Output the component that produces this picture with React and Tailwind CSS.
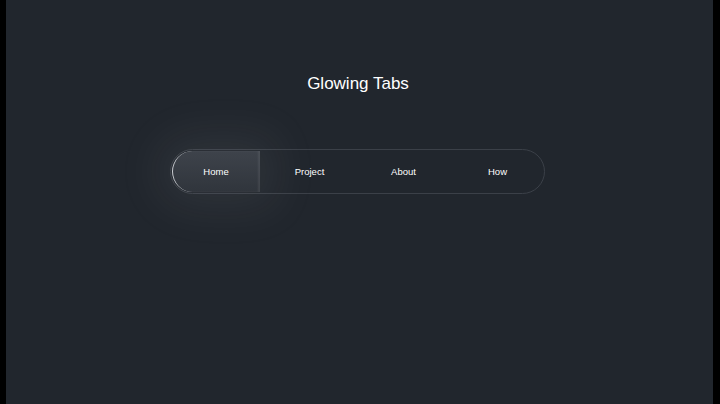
export default function App() {
  const tabs = ['Home', 'Project', 'About', 'How']
  const active = 0

  return (
    <div className="flex h-[404px] w-[720px] bg-black pl-[6px] pr-[7px]">
      <div className="flex flex-1 flex-col items-center bg-[#21262d] font-['Liberation_Sans',Arial,sans-serif]">
        <h1 className="mt-[73px] ml-[-3px] text-[17px] leading-[22px] text-white">Glowing Tabs</h1>

        <nav className="mt-[54px] ml-[-5px] flex h-[45px] w-[375px] gap-[6px] rounded-full border border-[#3b4048] p-[1px]">
          {tabs.map((tab, i) => (
            <button
              key={tab}
              className={
                i === active
                  ? 'flex w-[88px] items-center justify-center rounded-l-full rounded-r-[4px] border-l-[1.5px] border-[#c9ccd1] bg-gradient-to-b from-[#3e434b] to-[#30353c] pt-[1px] text-[9.5px] text-white shadow-[0_0_45px_16px_rgba(210,210,210,0.08),inset_-2px_0_2px_rgba(255,255,255,0.08)]'
                  : 'flex w-[88px] items-center justify-center pt-[1px] text-[9.5px] text-white'
              }
            >
              {tab}
            </button>
          ))}
        </nav>
      </div>
    </div>
  )
}
